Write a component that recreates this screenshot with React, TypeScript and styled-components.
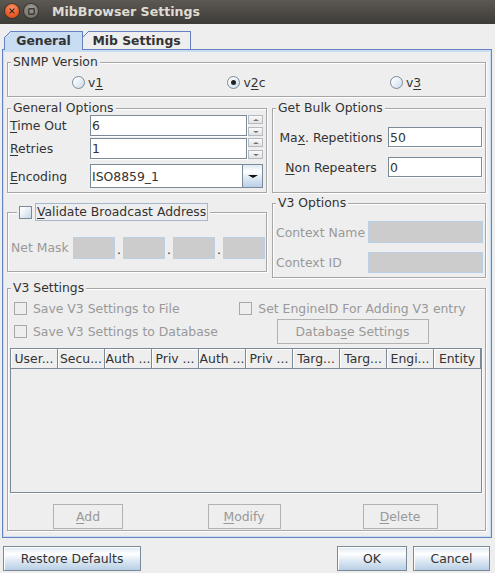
import React from "react";
import styled, { createGlobalStyle, css } from "styled-components";

const FONT = `"DejaVu Sans", "Liberation Sans", sans-serif`;

const C = {
  bg: "#eeeeee",
  text: "#333333",
  muted: "#999999",
  edge: "#7a8a99",
  focus: "#a3b8cc",
  blue: "#6382bf",
  tabSel: "#c8ddf2",
  etch: "#a6a6a6",
  pale: "#b8cfe5",
};

const oceanGradient = `linear-gradient(to bottom, #dde8f3 0%, #ffffff 30%, #dde8f3 60%, #b8cfe5 100%)`;

const GlobalStyle = createGlobalStyle`
  html, body { margin: 0; padding: 0; background: ${C.bg}; }
  body { font-family: ${FONT}; font-size: 12.4px; color: ${C.text}; }
  *, *::before, *::after { box-sizing: border-box; }
`;

const Window = styled.div`
  width: 495px;
  height: 573px;
  display: flex;
  flex-direction: column;
  background: ${C.bg};
  overflow: hidden;
`;

/* ---------- title bar ---------- */

const TitleBar = styled.header`
  flex: none;
  height: 24px;
  display: flex;
  align-items: center;
  padding: 0 0 2px 5px;
  background: linear-gradient(to bottom, #5c5852, #3d3b37);
`;

const WinButton = styled.span<{ $kind: "close" | "min" }>`
  width: 14px;
  height: 14px;
  border-radius: 50%;
  margin-right: 5px;
  display: flex;
  align-items: center;
  justify-content: center;
  box-shadow: 0 0 0 1px rgba(30, 28, 25, 0.45);
  ${(p) =>
    p.$kind === "close"
      ? css`
          background: radial-gradient(circle at 50% 30%, #f8916a 0%, #ea5b26 60%, #cc4718 100%);
        `
      : css`
          background: radial-gradient(circle at 50% 30%, #9e9a93 0%, #7f7c76 60%, #64615c 100%);
        `}
`;

const TitleText = styled.span`
  margin-left: 9px;
  font-weight: bold;
  font-size: 12.6px;
  color: #dfdbd2;
`;

/* ---------- tabs ---------- */

const Body = styled.div`
  flex: 1;
  display: flex;
  flex-direction: column;
  padding-top: 7px;
`;

const TabStrip = styled.div`
  flex: none;
  display: flex;
  align-items: flex-start;
  height: 18px;
  padding-left: 4px;
`;

const Tab = styled.div<{ $active?: boolean; $w: number; $first?: boolean }>`
  position: relative;
  width: ${(p) => p.$w}px;
  height: ${(p) => (p.$active ? 19 : 18)}px;
  margin-left: ${(p) => (p.$first ? 0 : -1)}px;
  z-index: ${(p) => (p.$active ? 2 : 1)};
  border: 1px solid ${C.blue};
  border-bottom: none;
  background: ${(p) => (p.$active ? C.tabSel : C.bg)};
  font-weight: bold;
  display: flex;
  align-items: flex-start;
  justify-content: center;
  padding-top: 2px;
  line-height: 14px;

  &::before {
    content: "";
    position: absolute;
    left: -1px;
    top: -1px;
    width: 7px;
    height: 7px;
    background: linear-gradient(
      135deg,
      ${C.bg} 0 calc(50% - 0.7px),
      ${C.blue} calc(50% - 0.7px) calc(50% + 0.7px),
      transparent calc(50% + 0.7px)
    );
  }
`;

const TabPanel = styled.div`
  flex: none;
  width: 490px;
  height: 489px;
  margin-left: 2px;
  border: 1px solid ${C.blue};
  box-shadow: inset 1px 2px 0 ${C.tabSel}, inset -1px -1px 0 ${C.tabSel};
  padding: 5px 5px 0 4px;
  display: flex;
  flex-direction: column;
`;

/* ---------- titled groups ---------- */

const Group = styled.fieldset<{ $h: number; $mt?: number }>`
  margin: ${(p) => p.$mt ?? 0}px 0 0 0;
  padding: 0;
  min-width: 0;
  height: ${(p) => p.$h}px;
  border: 1px solid ${C.etch};
  box-shadow: inset 1px 1px 0 #ffffff, 1px 1px 0 #ffffff;
  display: flex;
  flex-direction: column;
`;

const GroupTitle = styled.legend<{ $offset?: number }>`
  margin-left: ${(p) => p.$offset ?? 3}px;
  padding: 0 2px;
  line-height: 14px;
  background: ${C.bg};
  color: ${C.text};
`;

const CheckTitle = styled.span`
  display: inline-flex;
  align-items: center;
  gap: 3px;
  height: 18px;
`;

const FocusLabel = styled.span`
  border: 1px solid ${C.focus};
  padding: 0 1px;
  line-height: 16px;
  white-space: nowrap;
`;

const Mn = styled.span`
  text-decoration: underline;
  text-decoration-thickness: 1px;
  text-underline-offset: 2px;
`;

/* ---------- controls ---------- */

const RadioRow = styled.div`
  display: grid;
  grid-template-columns: repeat(3, 1fr);
  justify-items: center;
  padding-top: 7px;
`;

const RadioItem = styled.label`
  display: inline-flex;
  align-items: center;
  gap: 3px;
  line-height: 13px;
`;

const RadioDot = styled.span<{ $on?: boolean }>`
  position: relative;
  flex: none;
  width: 13px;
  height: 13px;
  border-radius: 50%;
  border: 1px solid ${C.edge};
  background: linear-gradient(135deg, #ffffff 0%, #f2f6fa 35%, #c9d9ea 100%);
  ${(p) =>
    p.$on &&
    css`
      &::after {
        content: "";
        position: absolute;
        left: 3px;
        top: 3px;
        width: 5px;
        height: 5px;
        border-radius: 50%;
        background: #222222;
      }
    `}
`;

const CheckBox = styled.span<{ $disabled?: boolean }>`
  flex: none;
  width: 13px;
  height: 13px;
  border: 1px solid ${(p) => (p.$disabled ? "#a8a8a8" : C.edge)};
  background: ${(p) =>
    p.$disabled ? C.bg : "linear-gradient(135deg, #ffffff 0%, #eef3f8 40%, #c4d6e9 100%)"};
`;

const CheckItem = styled.label<{ $disabled?: boolean }>`
  display: inline-flex;
  align-items: center;
  gap: 6px;
  white-space: nowrap;
  color: ${(p) => (p.$disabled ? C.muted : C.text)};
`;

const TextBox = styled.input<{ $w: number; $h: number }>`
  width: ${(p) => p.$w}px;
  height: ${(p) => p.$h}px;
  margin: 0;
  padding: 0 1px;
  border: 1px solid ${C.edge};
  border-radius: 0;
  background: #ffffff;
  font: inherit;
  color: ${C.text};
  outline: none;
  box-shadow: 1px 1px 0 #ffffff;

  &:disabled {
    background: #cccccc;
    border-color: ${C.pale};
    box-shadow: none;
  }
`;

const Spinner = styled.div`
  display: flex;
  align-items: flex-start;
`;

const SpinButtons = styled.div`
  display: flex;
  flex-direction: column;
  gap: 3px;
  margin-left: 1px;
`;

const SpinButton = styled.span`
  width: 15px;
  height: 9px;
  border: 1px solid #b4bac0;
  background: linear-gradient(to bottom, #fafafa, #e2e2e2);
  display: flex;
  align-items: center;
  justify-content: center;
`;

const Arrow = styled.span<{ $dir: "up" | "down"; $size?: number; $color?: string }>`
  width: 0;
  height: 0;
  border-left: ${(p) => p.$size ?? 3}px solid transparent;
  border-right: ${(p) => p.$size ?? 3}px solid transparent;
  ${(p) =>
    p.$dir === "up"
      ? css`
          border-bottom: ${Math.ceil((p.$size ?? 3) * 0.6)}px solid ${p.$color ?? "#707070"};
        `
      : css`
          border-top: ${Math.ceil((p.$size ?? 3) * 0.6)}px solid ${p.$color ?? "#707070"};
        `}
`;

const Combo = styled.div`
  display: flex;
  width: 173px;
  height: 24px;
  border: 1px solid ${C.edge};
  background: #ffffff;
`;

const ComboValue = styled.span`
  flex: 1;
  display: flex;
  align-items: center;
  padding-left: 1px;
`;

const ComboButton = styled.span`
  width: 20px;
  border-left: 1px solid ${C.edge};
  background: ${oceanGradient};
  display: flex;
  align-items: center;
  justify-content: center;
`;

const Button = styled.button<{ $w: number }>`
  width: ${(p) => p.$w}px;
  height: 25px;
  margin: 0;
  padding: 0;
  font: inherit;
  color: ${C.text};
  border: 1px solid ${C.edge};
  border-radius: 0;
  background: ${oceanGradient};
  box-shadow: inset 1px 1px 0 #ffffff;
  cursor: default;
  white-space: nowrap;

  &:disabled {
    color: ${C.muted};
    border-color: #b2b2b2;
    background: ${C.bg};
    box-shadow: none;
  }
`;

/* ---------- layout pieces ---------- */

const Columns = styled.div`
  display: grid;
  grid-template-columns: 260px 214px;
  column-gap: 5px;
  align-items: start;
  margin-top: 4px;
`;

const Column = styled.div`
  display: flex;
  flex-direction: column;
`;

const FormGrid = styled.div<{ $cols: string; $pl: number; $mt: number; $colGap?: number }>`
  display: grid;
  grid-template-columns: ${(p) => p.$cols};
  column-gap: ${(p) => p.$colGap ?? 0}px;
  align-items: center;
  padding-left: ${(p) => p.$pl}px;
  margin-top: ${(p) => p.$mt}px;
`;

const FieldLabel = styled.span<{ $disabled?: boolean; $center?: boolean }>`
  color: ${(p) => (p.$disabled ? C.muted : C.text)};
  white-space: nowrap;
  text-align: ${(p) => (p.$center ? "center" : "left")};
`;

const Gap = styled.div<{ $h: number }>`
  height: ${(p) => p.$h}px;
  grid-column: 1 / -1;
`;

const MaskRow = styled.div`
  display: grid;
  grid-template-columns: 62px 42px 8px 42px 8px 42px 8px 42px;
  align-items: center;
  padding-left: 3px;
  margin-top: 15px;
`;

const MaskDot = styled.span`
  text-align: center;
  align-self: end;
  line-height: 14px;
  padding-bottom: 2px;
`;

const V3Options = styled.div`
  display: grid;
  grid-template-columns: 226px 225px;
  grid-template-rows: 16px 25px;
  row-gap: 3px;
  align-items: center;
  padding: 5px 0 0 6px;
`;

const RightCell = styled.div`
  justify-self: center;
  display: flex;
`;

const TableScroll = styled.div`
  margin: 4px 0 0 2px;
  width: 472px;
  height: 145px;
  border: 1px solid ${C.edge};
  box-shadow: 1px 1px 0 #ffffff;
`;

const HeaderRow = styled.div`
  display: grid;
  grid-template-columns: repeat(10, 47px);
  height: 20px;
`;

const HeaderCell = styled.div`
  border-right: 1px solid ${C.edge};
  border-bottom: 1px solid ${C.edge};
  box-shadow: inset 1px 1px 0 #ffffff;
  display: flex;
  align-items: center;
  justify-content: center;
  white-space: nowrap;
  overflow: hidden;
`;

const ActionRow = styled.div`
  display: grid;
  grid-template-columns: repeat(3, 156px);
  justify-items: center;
  margin: 11px 0 0 2px;
`;

const Footer = styled.footer`
  display: flex;
  justify-content: space-between;
  margin-top: 8px;
  padding: 0 5px 0 3px;
`;

const FooterRight = styled.div`
  display: flex;
  gap: 6px;
`;

const headers = [
  "User...",
  "Secu...",
  "Auth ...",
  "Priv ...",
  "Auth ...",
  "Priv ...",
  "Targ...",
  "Targ...",
  "Engi...",
  "Entity",
];

function SpinField({ value }: { value: string }) {
  return (
    <Spinner>
      <TextBox $w={157} $h={21} defaultValue={value} readOnly />
      <SpinButtons>
        <SpinButton>
          <Arrow $dir="up" />
        </SpinButton>
        <SpinButton>
          <Arrow $dir="down" />
        </SpinButton>
      </SpinButtons>
    </Spinner>
  );
}

export default function App() {
  return (
    <Window>
      <GlobalStyle />
      <TitleBar>
        <WinButton $kind="close">
          <svg width="6" height="6" viewBox="0 0 6 6">
            <path d="M0.6 0.6 L5.4 5.4 M5.4 0.6 L0.6 5.4" stroke="#3b2a22" strokeWidth="1.3" />
          </svg>
        </WinButton>
        <WinButton $kind="min">
          <svg width="7" height="7" viewBox="0 0 7 7">
            <rect x="0.75" y="0.75" width="5.5" height="5.5" rx="0.8" fill="none" stroke="#3a3834" strokeWidth="1.3" />
          </svg>
        </WinButton>
        <TitleText>MibBrowser Settings</TitleText>
      </TitleBar>

      <Body>
        <TabStrip>
          <Tab $active $first $w={79}>General</Tab>
          <Tab $w={109}>Mib Settings</Tab>
        </TabStrip>

        <TabPanel>
          <Group $h={42}>
            <GroupTitle>SNMP Version</GroupTitle>
            <RadioRow>
              <RadioItem>
                <RadioDot />
                <span>
                  v<Mn>1</Mn>
                </span>
              </RadioItem>
              <RadioItem>
                <RadioDot $on />
                <span>
                  v<Mn>2</Mn>c
                </span>
              </RadioItem>
              <RadioItem>
                <RadioDot />
                <span>
                  v<Mn>3</Mn>
                </span>
              </RadioItem>
            </RadioRow>
          </Group>

          <Columns>
            <Column>
              <Group $h={92}>
                <GroupTitle>General Options</GroupTitle>
                <FormGrid $cols="80px 172px" $pl={2} $mt={0}>
                  <FieldLabel>
                    <Mn>T</Mn>ime Out
                  </FieldLabel>
                  <SpinField value="6" />
                  <Gap $h={2} />
                  <FieldLabel>
                    <Mn>R</Mn>etries
                  </FieldLabel>
                  <SpinField value="1" />
                  <Gap $h={5} />
                  <FieldLabel>
                    <Mn>E</Mn>ncoding
                  </FieldLabel>
                  <Combo>
                    <ComboValue>ISO8859_1</ComboValue>
                    <ComboButton>
                      <Arrow $dir="down" $size={5} $color="#111111" />
                    </ComboButton>
                  </Combo>
                </FormGrid>
              </Group>

              <Group $h={69} $mt={10}>
                <GroupTitle $offset={9}>
                  <CheckTitle>
                    <CheckBox />
                    <FocusLabel>
                      <Mn>V</Mn>alidate Broadcast Address
                    </FocusLabel>
                  </CheckTitle>
                </GroupTitle>
                <MaskRow>
                  <FieldLabel $disabled>Net Mask</FieldLabel>
                  <TextBox $w={42} $h={22} disabled />
                  <MaskDot>.</MaskDot>
                  <TextBox $w={42} $h={22} disabled />
                  <MaskDot>.</MaskDot>
                  <TextBox $w={42} $h={22} disabled />
                  <MaskDot>.</MaskDot>
                  <TextBox $w={42} $h={22} disabled />
                </MaskRow>
              </Group>
            </Column>

            <Column>
              <Group $h={92}>
                <GroupTitle $offset={3}>Get Bulk Options</GroupTitle>
                <FormGrid $cols="110px 94px" $pl={3} $mt={12} $colGap={2}>
                  <FieldLabel $center>
                    Ma<Mn>x</Mn>. Repetitions
                  </FieldLabel>
                  <TextBox $w={94} $h={20} defaultValue="50" readOnly />
                  <Gap $h={10} />
                  <FieldLabel $center>
                    <Mn>N</Mn>on Repeaters
                  </FieldLabel>
                  <TextBox $w={94} $h={20} defaultValue="0" readOnly />
                </FormGrid>
              </Group>

              <Group $h={82} $mt={3}>
                <GroupTitle>V3 Options</GroupTitle>
                <FormGrid $cols="92px 115px" $pl={3} $mt={11}>
                  <FieldLabel $disabled>Context Name</FieldLabel>
                  <TextBox $w={115} $h={22} disabled />
                  <Gap $h={9} />
                  <FieldLabel $disabled>Context ID</FieldLabel>
                  <TextBox $w={115} $h={21} disabled />
                </FormGrid>
              </Group>
            </Column>
          </Columns>

          <Group $h={250} $mt={3}>
            <GroupTitle>V3 Settings</GroupTitle>
            <V3Options>
              <CheckItem $disabled>
                <CheckBox $disabled />
                Save V3 Settings to File
              </CheckItem>
              <RightCell>
                <CheckItem $disabled>
                  <CheckBox $disabled />
                  Set EngineID For Adding V3 entry
                </CheckItem>
              </RightCell>
              <CheckItem $disabled>
                <CheckBox $disabled />
                Save V3 Settings to Database
              </CheckItem>
              <RightCell>
                <Button $w={152} disabled>
                  Databa<Mn>s</Mn>e Settings
                </Button>
              </RightCell>
            </V3Options>

            <TableScroll>
              <HeaderRow>
                {headers.map((h, i) => (
                  <HeaderCell key={i}>{h}</HeaderCell>
                ))}
              </HeaderRow>
            </TableScroll>

            <ActionRow>
              <Button $w={70} disabled>
                <Mn>A</Mn>dd
              </Button>
              <Button $w={73} disabled>
                <Mn>M</Mn>odify
              </Button>
              <Button $w={75} disabled>
                <Mn>D</Mn>elete
              </Button>
            </ActionRow>
          </Group>
        </TabPanel>

        <Footer>
          <Button $w={138}>Restore Defaults</Button>
          <FooterRight>
            <Button $w={70}>OK</Button>
            <Button $w={77}>Cancel</Button>
          </FooterRight>
        </Footer>
      </Body>
    </Window>
  );
}
